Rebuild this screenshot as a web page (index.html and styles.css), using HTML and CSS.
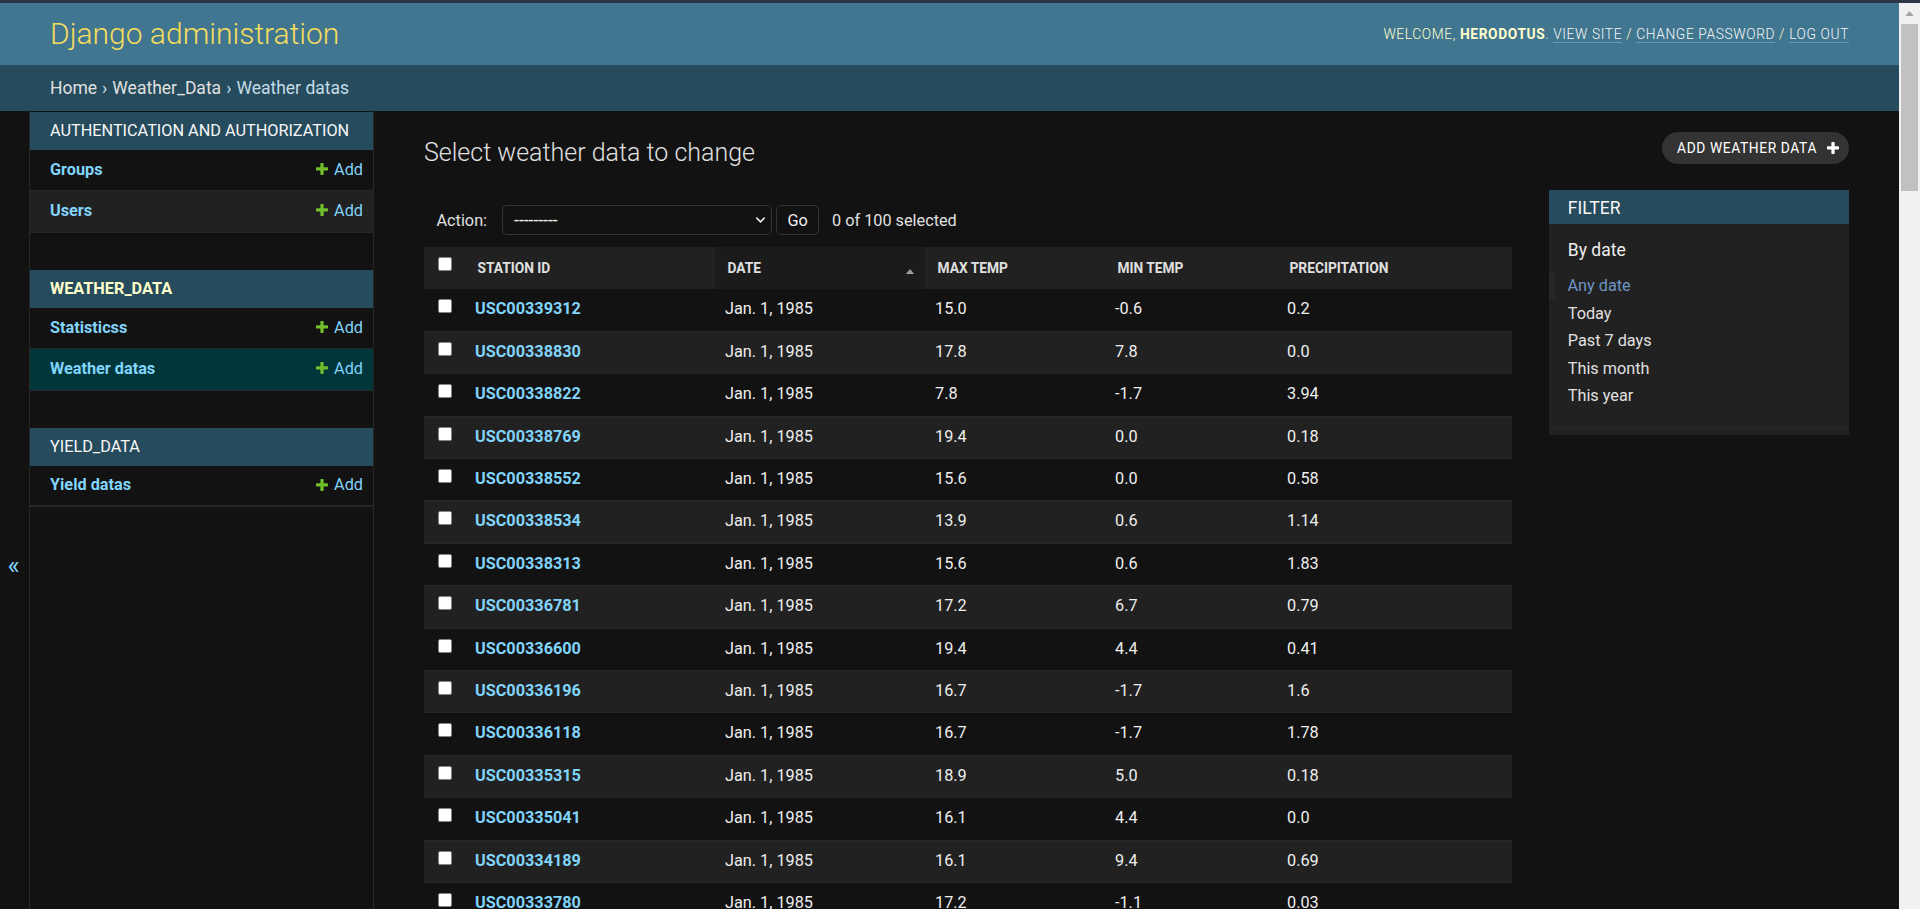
FILE: index.html
```html
<!DOCTYPE html>
<html lang="en">
<head>
<meta charset="utf-8">
<title>Select weather data to change | Django site admin</title>
<link rel="stylesheet" href="styles.css">
</head>
<body>
<div class="topstrip"></div>
<div class="viewport">
  <div class="page">
    <header class="header">
      <h1 class="branding">Django administration</h1>
      <div class="user-tools">
        Welcome, <strong>herodotus</strong>. <a href="#">View site</a> / <a href="#">Change password</a> / <a href="#">Log out</a>
      </div>
    </header>
    <nav class="breadcrumbs">
      <a href="#">Home</a><span class="sep">›</span><a href="#">Weather_Data</a><span class="sep">›</span><span>Weather datas</span>
    </nav>
    <div class="main">
      <div class="toggle-nav">«</div>
      <aside class="nav-sidebar">
        <div class="module">
          <div class="caption">Authentication and Authorization</div>
          <div class="nav-row"><a class="model" href="#">Groups</a><a class="addlink" href="#"><svg class="plus" viewBox="192 192 1408 1408"><path d="M1600 796v192q0 40-28 68t-68 28h-416v416q0 40-28 68t-68 28h-192q-40 0-68-28t-28-68v-416h-416q-40 0-68-28t-28-68v-192q0-40 28-68t68-28h416v-416q0-40 28-68t68-28h192q40 0 68 28t28 68v416h416q40 0 68 28t28 68z"/></svg>Add</a></div>
          <div class="nav-row even"><a class="model" href="#">Users</a><a class="addlink" href="#"><svg class="plus" viewBox="192 192 1408 1408"><path d="M1600 796v192q0 40-28 68t-68 28h-416v416q0 40-28 68t-68 28h-192q-40 0-68-28t-28-68v-416h-416q-40 0-68-28t-28-68v-192q0-40 28-68t68-28h416v-416q0-40 28-68t68-28h192q40 0 68 28t28 68v416h416q40 0 68 28t28 68z"/></svg>Add</a></div>
        </div>
        <div class="module">
          <div class="caption current">Weather_Data</div>
          <div class="nav-row"><a class="model" href="#">Statisticss</a><a class="addlink" href="#"><svg class="plus" viewBox="192 192 1408 1408"><path d="M1600 796v192q0 40-28 68t-68 28h-416v416q0 40-28 68t-68 28h-192q-40 0-68-28t-28-68v-416h-416q-40 0-68-28t-28-68v-192q0-40 28-68t68-28h416v-416q0-40 28-68t68-28h192q40 0 68 28t28 68v416h416q40 0 68 28t28 68z"/></svg>Add</a></div>
          <div class="nav-row selected"><a class="model" href="#">Weather datas</a><a class="addlink" href="#"><svg class="plus" viewBox="192 192 1408 1408"><path d="M1600 796v192q0 40-28 68t-68 28h-416v416q0 40-28 68t-68 28h-192q-40 0-68-28t-28-68v-416h-416q-40 0-68-28t-28-68v-192q0-40 28-68t68-28h416v-416q0-40 28-68t68-28h192q40 0 68 28t28 68v416h416q40 0 68 28t28 68z"/></svg>Add</a></div>
        </div>
        <div class="module">
          <div class="caption">Yield_Data</div>
          <div class="nav-row last"><a class="model" href="#">Yield datas</a><a class="addlink" href="#"><svg class="plus" viewBox="192 192 1408 1408"><path d="M1600 796v192q0 40-28 68t-68 28h-416v416q0 40-28 68t-68 28h-192q-40 0-68-28t-28-68v-416h-416q-40 0-68-28t-28-68v-192q0-40 28-68t68-28h416v-416q0-40 28-68t68-28h192q40 0 68 28t28 68v416h416q40 0 68 28t28 68z"/></svg>Add</a></div>
        </div>
      </aside>
      <main class="content">
        <div class="content-head">
          <h1 class="title">Select weather data to change</h1>
          <a class="addbtn" href="#">Add weather data<svg class="plus-white" viewBox="192 192 1408 1408"><path d="M1600 796v192q0 40-28 68t-68 28h-416v416q0 40-28 68t-68 28h-192q-40 0-68-28t-28-68v-416h-416q-40 0-68-28t-28-68v-192q0-40 28-68t68-28h416v-416q0-40 28-68t68-28h192q40 0 68 28t28 68v416h416q40 0 68 28t28 68z"/></svg></a>
        </div>
        <div class="changelist">
          <div class="form-container">
            <div class="actions">
              <label class="action-label">Action:</label>
              <div class="select-wrap">
                <select class="action-select"><option>---------</option></select>
                <svg class="chevron" viewBox="0 0 12 8"><polyline points="1.5,1.5 6,6 10.5,1.5"/></svg>
              </div>
              <button class="go" type="button">Go</button>
              <span class="counter">0 of 100 selected</span>
            </div>
            <table class="results">
              <colgroup>
                <col class="c-check"><col class="c-station"><col class="c-date"><col class="c-max"><col class="c-min"><col class="c-prec">
              </colgroup>
              <thead>
                <tr>
                  <th class="th-check"><input type="checkbox" class="cb"></th>
                  <th>Station ID</th>
                  <th class="sorted"><div class="sorted-inner"><span>Date</span><svg class="sort-icon" viewBox="0 0 10 6"><polygon points="0,6 5,0 10,6"/></svg></div></th>
                  <th>Max temp</th>
                  <th>Min temp</th>
                  <th>Precipitation</th>
                </tr>
              </thead>
              <tbody>
                <tr><td class="td-check"><input type="checkbox" class="cb"></td><th class="station"><a href="#">USC00339312</a></th><td>Jan. 1, 1985</td><td>15.0</td><td>-0.6</td><td>0.2</td></tr>
                <tr><td class="td-check"><input type="checkbox" class="cb"></td><th class="station"><a href="#">USC00338830</a></th><td>Jan. 1, 1985</td><td>17.8</td><td>7.8</td><td>0.0</td></tr>
                <tr><td class="td-check"><input type="checkbox" class="cb"></td><th class="station"><a href="#">USC00338822</a></th><td>Jan. 1, 1985</td><td>7.8</td><td>-1.7</td><td>3.94</td></tr>
                <tr><td class="td-check"><input type="checkbox" class="cb"></td><th class="station"><a href="#">USC00338769</a></th><td>Jan. 1, 1985</td><td>19.4</td><td>0.0</td><td>0.18</td></tr>
                <tr><td class="td-check"><input type="checkbox" class="cb"></td><th class="station"><a href="#">USC00338552</a></th><td>Jan. 1, 1985</td><td>15.6</td><td>0.0</td><td>0.58</td></tr>
                <tr><td class="td-check"><input type="checkbox" class="cb"></td><th class="station"><a href="#">USC00338534</a></th><td>Jan. 1, 1985</td><td>13.9</td><td>0.6</td><td>1.14</td></tr>
                <tr><td class="td-check"><input type="checkbox" class="cb"></td><th class="station"><a href="#">USC00338313</a></th><td>Jan. 1, 1985</td><td>15.6</td><td>0.6</td><td>1.83</td></tr>
                <tr><td class="td-check"><input type="checkbox" class="cb"></td><th class="station"><a href="#">USC00336781</a></th><td>Jan. 1, 1985</td><td>17.2</td><td>6.7</td><td>0.79</td></tr>
                <tr><td class="td-check"><input type="checkbox" class="cb"></td><th class="station"><a href="#">USC00336600</a></th><td>Jan. 1, 1985</td><td>19.4</td><td>4.4</td><td>0.41</td></tr>
                <tr><td class="td-check"><input type="checkbox" class="cb"></td><th class="station"><a href="#">USC00336196</a></th><td>Jan. 1, 1985</td><td>16.7</td><td>-1.7</td><td>1.6</td></tr>
                <tr><td class="td-check"><input type="checkbox" class="cb"></td><th class="station"><a href="#">USC00336118</a></th><td>Jan. 1, 1985</td><td>16.7</td><td>-1.7</td><td>1.78</td></tr>
                <tr><td class="td-check"><input type="checkbox" class="cb"></td><th class="station"><a href="#">USC00335315</a></th><td>Jan. 1, 1985</td><td>18.9</td><td>5.0</td><td>0.18</td></tr>
                <tr><td class="td-check"><input type="checkbox" class="cb"></td><th class="station"><a href="#">USC00335041</a></th><td>Jan. 1, 1985</td><td>16.1</td><td>4.4</td><td>0.0</td></tr>
                <tr><td class="td-check"><input type="checkbox" class="cb"></td><th class="station"><a href="#">USC00334189</a></th><td>Jan. 1, 1985</td><td>16.1</td><td>9.4</td><td>0.69</td></tr>
                <tr><td class="td-check"><input type="checkbox" class="cb"></td><th class="station"><a href="#">USC00333780</a></th><td>Jan. 1, 1985</td><td>17.2</td><td>-1.1</td><td>0.03</td></tr>
              </tbody>
            </table>
          </div>
          <div class="filter">
            <h2 class="filter-title">Filter</h2>
            <h3 class="filter-sub">By date</h3>
            <ul class="filter-list">
              <li class="selected"><a href="#">Any date</a></li>
              <li><a href="#">Today</a></li>
              <li><a href="#">Past 7 days</a></li>
              <li><a href="#">This month</a></li>
              <li><a href="#">This year</a></li>
            </ul>
          </div>
        </div>
      </main>
    </div>
  </div>
  <div class="scrollbar">
    <div class="sb-arrow"><svg viewBox="0 0 10 6"><polygon points="0,6 5,0 10,6"/></svg></div>
    <div class="sb-thumb"></div>
  </div>
</div>
</body>
</html>
```
FILE: styles.css
```css
* { box-sizing: border-box; }
html, body { margin: 0; padding: 0; height: 100%; }
body {
  background: #121212;
  color: #eeeeee;
  font-family: Roboto, "Noto Sans", "Liberation Sans", sans-serif;
  font-size: 17.5px;
  overflow: hidden;
}
a { text-decoration: none; }

.topstrip { height: 3px; background: #2f3545; }
.viewport { display: flex; height: 906px; }
.page { flex: 1; min-width: 0; overflow: hidden; display: flex; flex-direction: column; }

/* scrollbar */
.scrollbar { flex: 0 0 21px; background: #f1f1f1; display: flex; flex-direction: column; align-items: center; }
.sb-arrow { height: 21px; width: 100%; display: flex; align-items: center; justify-content: center; }
.sb-arrow svg { width: 9px; height: 5px; fill: #a3a3a3; }
.sb-thumb { width: 17px; height: 167px; background: #c1c1c1; }

/* header */
.header {
  height: 62px;
  flex: 0 0 62px;
  padding: 0 50px;
  background: #417690;
  display: flex;
  justify-content: space-between;
  align-items: center;
}
.branding { margin: 0; font-size: 30px; font-weight: 300; line-height: 36px; color: #f5dd5d; }
.user-tools {
  font-size: 13.75px;
  font-weight: 300;
  letter-spacing: 0.625px;
  text-transform: uppercase;
  color: #ffffcc;
  line-height: 20px;
}
.user-tools strong { font-weight: 700; }
.user-tools a { color: #f7f7f7; border-bottom: 1px solid rgba(255, 255, 255, 0.25); }

/* breadcrumbs */
.breadcrumbs {
  height: 46px;
  flex: 0 0 46px;
  padding: 0 50px;
  background: #264b5d;
  color: #c4dce8;
  font-size: 17.5px;
  display: flex;
  align-items: center;
}
.breadcrumbs a { color: #e0e0e0; }
.breadcrumbs .sep { padding: 0 5px; }

/* main */
.main { display: flex; flex: 1; min-height: 0; align-items: flex-start; }
.toggle-nav {
  flex: 0 0 30px;
  height: 909px;
  border-right: 1px solid #272727;
  display: flex;
  align-items: center;
  justify-content: center;
  color: #81d4fa;
  font-size: 26px;
  line-height: 1;
  padding-bottom: 2px;
  padding-right: 2px;
}
.nav-sidebar {
  flex: 0 0 344px;
  width: 344px;
  min-width: 0;
  overflow: hidden;
  height: 909px;
  border-top: 1px solid transparent;
  border-right: 1px solid #272727;
}
.module { margin-bottom: 37.5px; }
.caption {
  height: 38px;
  padding: 0 20px 1px;
  display: flex;
  align-items: center;
  background: #264b5d;
  color: #f7f7f7;
  font-size: 16.25px;
  letter-spacing: 0;
  text-transform: uppercase;
  white-space: nowrap;
}
.caption.current { color: #ffffcc; font-weight: 700; }
.nav-row {
  height: 41.25px;
  padding: 0 10px 2px 20px;
  display: flex;
  align-items: center;
  justify-content: space-between;
  border-bottom: 1px solid #272727;
  font-size: 16.25px;
}
.nav-row.even { background: #212121; }
.nav-row.selected { background: #00363a; }
.nav-row.last { border-bottom-width: 2px; }
.model { color: #81d4fa; font-weight: 700; }
.addlink { color: #81d4fa; display: flex; align-items: center; }
.plus { width: 12px; height: 12px; fill: #70bf2b; margin-right: 6px; }

/* content */
.content { flex: 1; min-width: 0; padding: 25px 50px; }
.content-head { display: flex; justify-content: space-between; align-items: flex-start; margin-bottom: 25px; }
.title { margin: 2px 0 -2px; font-size: 25px; font-weight: 300; line-height: 29px; color: #e0e0e0; }
.addbtn {
  margin-top: -4px;
  height: 32px;
  padding: 0 10px 0 15px;
  border-radius: 16px;
  background: #333333;
  color: #ffffff;
  font-size: 13.75px;
  letter-spacing: 0.625px;
  text-transform: uppercase;
  display: flex;
  align-items: center;
}
.plus-white { width: 12px; height: 12px; fill: #ffffff; margin-left: 10px; }

.changelist { display: flex; align-items: flex-start; }
.form-container { flex: 1; min-width: 0; }
.actions {
  height: 57px;
  padding: 15px 12.5px 12px;
  display: flex;
  align-items: center;
  color: #e0e0e0;
  font-size: 16.25px;
}
.select-wrap { position: relative; margin-left: 15px; width: 270px; height: 30px; }
.action-select {
  appearance: none;
  -webkit-appearance: none;
  width: 100%;
  height: 30px;
  background: #121212;
  color: #eeeeee;
  border: 1px solid #353535;
  border-radius: 5px;
  padding: 0 0 0 11px;
  font-family: inherit;
  font-size: 17.5px;
  margin: 0;
}
.chevron {
  position: absolute;
  right: 6px;
  top: 11px;
  width: 11px;
  height: 8px;
  fill: none;
  stroke: #e8e8e8;
  stroke-width: 1.8;
}
.go {
  margin-left: 4px;
  width: 43px;
  height: 30px;
  background: #121212;
  color: #eeeeee;
  border: 1px solid #353535;
  border-radius: 5px;
  font-family: inherit;
  font-size: 16.25px;
  padding: 0;
}
.counter { margin-left: 13px; }

.results { width: 100%; border-collapse: collapse; table-layout: fixed; }
.c-check { width: 41px; }
.c-station { width: 250px; }
.c-date { width: 210px; }
.c-max { width: 180px; }
.c-min { width: 172px; }
.results thead th {
  height: 42px;
  padding: 0 12.5px;
  background: #212121;
  color: #e0e0e0;
  font-size: 13.75px;
  font-weight: 700;
  text-transform: uppercase;
  text-align: left;
  vertical-align: middle;
  white-space: nowrap;
}
.results thead th.sorted { background: #1b1b1b; }
.sorted-inner { display: flex; justify-content: space-between; align-items: center; }
.sort-icon { width: 10px; height: 5px; fill: #9c9c9c; margin-top: 7px; margin-right: -2px; }
.results thead th.th-check { padding: 0; text-align: center; }
.th-check .cb { margin-top: -3px; }
.results tbody tr { height: 42.4px; }
.results tbody tr:nth-child(even) { background: #212121; }
.results tbody td, .results tbody th {
  padding: 10px;
  font-size: 16.25px;
  line-height: 20px;
  text-align: left;
  vertical-align: top;
  border-bottom: 1px solid #272727;
  color: #eeeeee;
  font-weight: 400;
}
.results tbody td.td-check { padding: 10px 0 0; text-align: center; }
.results .station a { color: #81d4fa; font-weight: 700; }
.cb {
  appearance: none;
  -webkit-appearance: none;
  width: 14px;
  height: 14px;
  margin: 0;
  background: #ffffff;
  border: 1px solid #858585;
  border-radius: 2px;
  display: inline-block;
  vertical-align: top;
}

/* filter */
.filter { flex: 0 0 300px; margin-left: 37.5px; background: #212121; padding-bottom: 6px; }
.filter-title {
  margin: 0 0 15px;
  padding: 7.5px 18.75px 5px;
  background: #264b5d;
  color: #f7f7f7;
  font-size: 17.5px;
  font-weight: 400;
  line-height: 21.5px;
  letter-spacing: 0;
  text-transform: uppercase;
}
.filter-sub {
  margin: 0 0 11.5px;
  padding: 1px 18.75px 0;
  font-size: 17.5px;
  font-weight: 400;
  line-height: 21.5px;
  color: #eeeeee;
}
.filter-list {
  list-style: none;
  margin: -1px 0 0;
  padding: 0 18.75px 18.75px;
  border-bottom: 1px solid #272727;
}
.filter-list li { font-size: 16.25px; line-height: 25px; padding: 1.25px 0; }
.filter-list a { color: #e0e0e0; display: block; }
.filter-list li.selected { border-left: 6.25px solid #272727; padding-left: 12.5px; margin-left: -18.75px; }
.filter-list li.selected a { color: #6f94c6; }
```
